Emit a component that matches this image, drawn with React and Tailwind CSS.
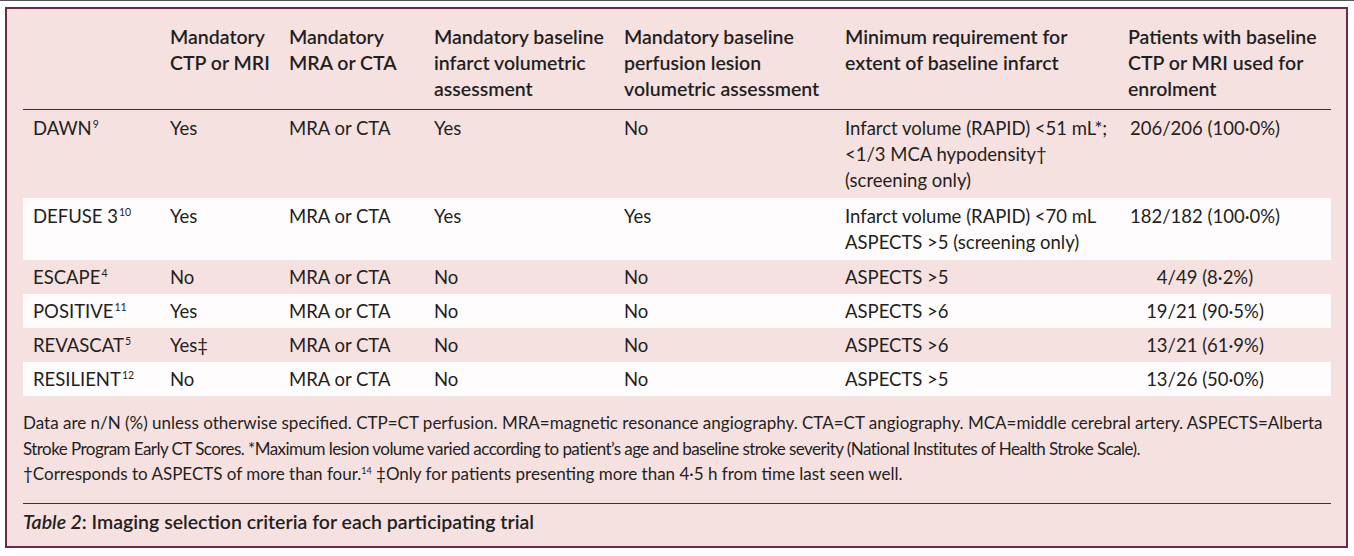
import React from "react";

const rows = [
  {
    name: "DAWN",
    sup: "9",
    ctp: "Yes",
    mra: "MRA or CTA",
    infarct: "Yes",
    perfusion: "No",
    req: ["Infarct volume (RAPID) <51 mL*;", "<1/3 MCA hypodensity†", "(screening only)"],
    patients: "206/206 (100·0%)",
    white: false,
  },
  {
    name: "DEFUSE 3",
    sup: "10",
    ctp: "Yes",
    mra: "MRA or CTA",
    infarct: "Yes",
    perfusion: "Yes",
    req: ["Infarct volume (RAPID) <70 mL", "ASPECTS >5 (screening only)"],
    patients: "182/182 (100·0%)",
    white: true,
  },
  { name: "ESCAPE", sup: "4", ctp: "No", mra: "MRA or CTA", infarct: "No", perfusion: "No", req: ["ASPECTS >5"], patients: "4/49 (8·2%)", white: false },
  { name: "POSITIVE", sup: "11", ctp: "Yes", mra: "MRA or CTA", infarct: "No", perfusion: "No", req: ["ASPECTS >6"], patients: "19/21 (90·5%)", white: true },
  { name: "REVASCAT", sup: "5", ctp: "Yes‡", mra: "MRA or CTA", infarct: "No", perfusion: "No", req: ["ASPECTS >6"], patients: "13/21 (61·9%)", white: false },
  { name: "RESILIENT", sup: "12", ctp: "No", mra: "MRA or CTA", infarct: "No", perfusion: "No", req: ["ASPECTS >5"], patients: "13/26 (50·0%)", white: true },
];

const grid = "grid grid-cols-[137px_119px_145px_190px_221px_283px_154px] pl-[10px]";

const App = () => {
  return (
    <div className="w-[1354px] h-[556px] bg-white text-[#231f20] font-['Lato','Liberation_Sans',sans-serif]">
      <div className="h-px bg-[#555]" />
      <div className="ml-[5px] mt-[6px] w-[1343px] border-2 border-[#6d2a44] bg-[#f6e1e1] pl-[16px] pr-[15px] pt-[15px] pb-[11px]">
        <div className={`${grid} font-semibold text-[19.5px] leading-[26px] pb-[7px] border-b border-[#333]`}>
          <div />
          <div className="whitespace-nowrap">Mandatory<br />CTP or MRI</div>
          <div className="whitespace-nowrap">Mandatory<br />MRA or CTA</div>
          <div className="whitespace-nowrap">Mandatory baseline<br />infarct volumetric<br />assessment</div>
          <div className="whitespace-nowrap">Mandatory baseline<br />perfusion lesion<br />volumetric assessment</div>
          <div className="whitespace-nowrap">Minimum requirement for<br />extent of baseline infarct</div>
          <div className="whitespace-nowrap">Patients with baseline<br />CTP or MRI used for<br />enrolment</div>
        </div>
        {rows.map((r) => (
          <div
            key={r.name}
            className={`${grid} ${r.req.length > 1 ? "py-[5px]" : "py-1"} text-[18.5px] leading-[26px] ${r.white ? "bg-[#fefcfc]" : ""}`}
          >
            <div className="whitespace-nowrap">
              {r.name}
              <sup className="text-[10.5px] -top-[7px] ml-px">{r.sup}</sup>
            </div>
            <div>{r.ctp}</div>
            <div>{r.mra}</div>
            <div>{r.infarct}</div>
            <div>{r.perfusion}</div>
            <div className="whitespace-nowrap">
              {r.req.map((line) => (
                <div key={line}>{line}</div>
              ))}
            </div>
            <div className="text-center whitespace-nowrap">{r.patients}</div>
          </div>
        ))}
        <div className="mt-[14px] text-[17px] leading-[25.5px] whitespace-nowrap">
          <div>
            Data are n/N (%) unless otherwise specified. CTP=CT perfusion. MRA=magnetic resonance angiography. CTA=CT angiography. MCA=middle cerebral artery. ASPECTS=Alberta
          </div>
          <div className="tracking-[-0.55px]">
            Stroke Program Early CT Scores. *Maximum lesion volume varied according to patient’s age and baseline stroke severity (National Institutes of Health Stroke Scale).
          </div>
          <div>
            †Corresponds to ASPECTS of more than four.<sup className="text-[9px] -top-[6px]">14</sup> ‡Only for patients presenting more than 4·5 h from time last seen well.
          </div>
        </div>
        <div className="mt-[16px] border-t border-[#333] pt-[5px] text-[19.5px] leading-[26px] font-semibold">
          <span className="italic">Table 2</span>: Imaging selection criteria for each participating trial
        </div>
      </div>
    </div>
  );
};

export default App;
